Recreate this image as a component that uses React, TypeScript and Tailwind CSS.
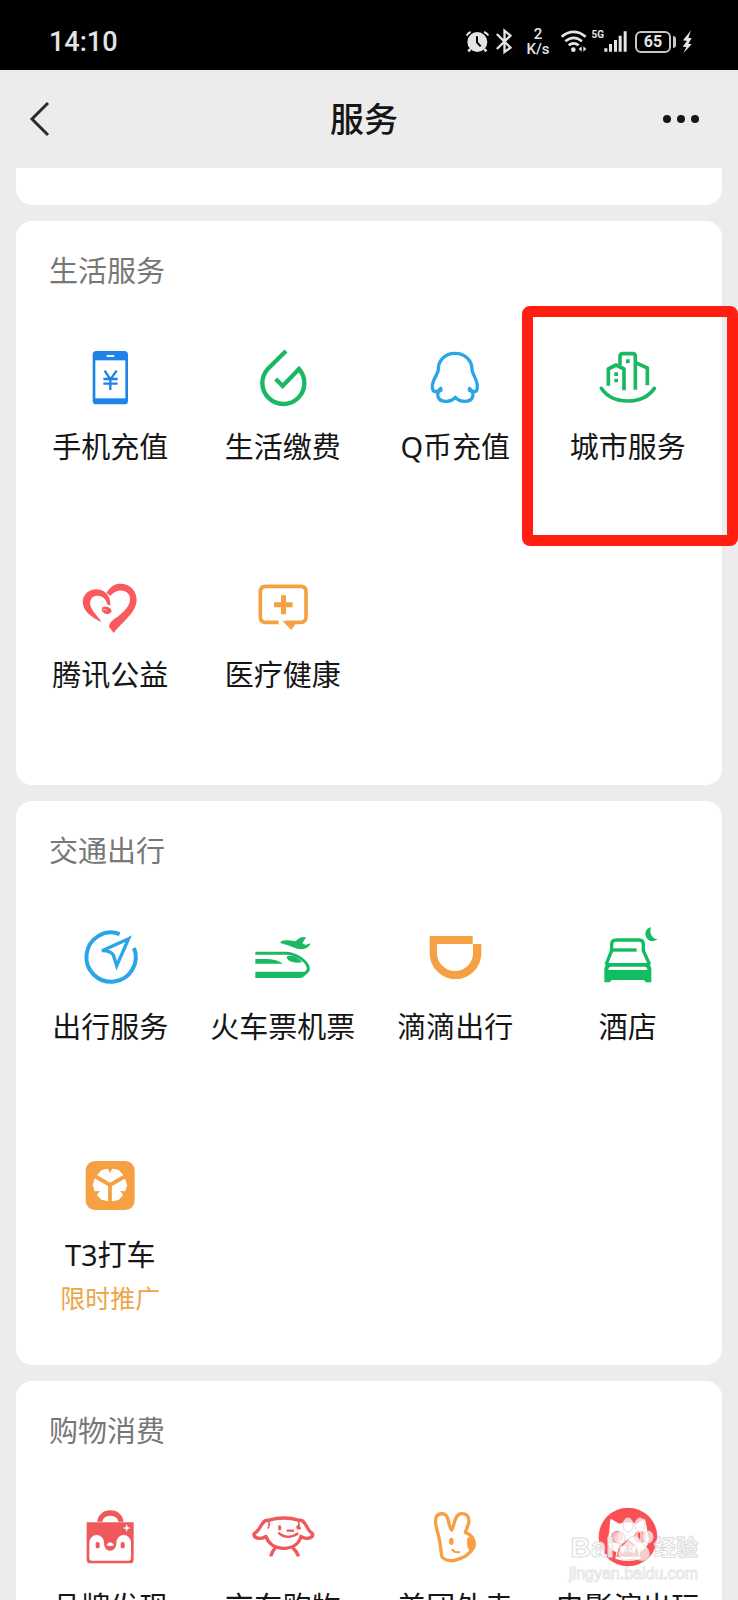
import type { ReactNode } from "react";

type Service = { name: string; icon: ReactNode; promo?: string; highlighted?: boolean };
type Section = { title: string; services: Service[] };

function Icon({ box, children }: { box: string; children: ReactNode }) {
  return (
    <svg viewBox={box} className="size-16 shrink-0" fill="none" aria-hidden="true">
      {children}
    </svg>
  );
}

const BLUE = "#2aa5e8";
const GREEN = "#1bb864";
const ORANGE = "#f5a143";
const RED = "#f0595c";

const PhoneIcon = () => (
  <Icon box="145 48 192 192">
    <rect x="189" y="63" width="106" height="160" rx="11" fill="#1e83e8" />
    <rect x="197" y="91" width="90" height="114" fill="#fff" />
    <rect x="231" y="75" width="23" height="6" rx="2" fill="#fff" />
    <path d="M225 122 L242 148 L261 122 M242 146 V180 M221 147 H264 M221 161 H264" stroke="#1e83e8" strokeWidth="7" />
  </Icon>
);

const DropIcon = () => (
  <Icon box="662 48 192 192">
    <path d="M767 63 L713 116 A63 63 0 1 0 806 117 L757 168 L736 147" stroke={GREEN} strokeWidth="13" />
  </Icon>
);

const PenguinIcon = () => (
  <Icon box="130 138 192 192">
    <path
      d="M226 160 C195 160 176 182 176 208 C176 222 158 238 158 259 C158 269 162 275 167 275 C173 275 179 271 183 265 L184 271 C176 273 172 280 175 290 C178 300 188 304 200 304 C212 304 221 300 227 292 C233 300 242 304 254 304 C266 304 276 300 279 290 C282 280 278 273 269 271 L270 265 C274 271 280 275 285 275 C290 275 293 269 293 259 C293 238 277 222 277 208 C277 182 257 160 226 160 Z"
      stroke={BLUE}
      strokeWidth="10"
      strokeLinejoin="round"
    />
  </Icon>
);

const CityIcon = () => (
  <Icon box="647 138 192 192">
    <g stroke={GREEN} strokeWidth="11" strokeLinejoin="round">
      <path d="M663 265 C680 291 710 303 742 303 C774 303 804 291 822 265" strokeLinecap="round" />
      <path d="M684 257 V207 L707 195 L731 207 V271" />
      <path d="M719 196 V170 Q719 161 728 161 H757 Q765 161 765 170 V269" />
      <path d="M766 188 L801 204 V256" />
    </g>
    <path d="M737 178 h11 v12 h-11z M702 217 h11 v11 h-11z M702 236 h11 v11 h-11z" fill={GREEN} />
  </Icon>
);

const HeartIcon = () => (
  <Icon box="145 42 192 192">
    <g fill="#fa5a5e">
      <path d="M230 99 C243 78 257 71 272 71 C301 71 322 93 321 121 C319 158 280 184 252 219 L238 200 C240 186 249 180 263 171 C286 153 302 137 301 115 C299 90 264 82 243 107 Z" />
      <path d="M214 186 C184 172 160 152 159 127 C159 104 178 88 201 88 C226 89 244 108 242 136 L234 135 C229 115 216 106 202 107 C184 108 177 124 184 142 C190 156 202 168 212 180 Z" />
      <path d="M219 142 C226 136 241 141 245 149 C248 158 237 164 228 161 C219 159 212 151 219 142 Z" />
    </g>
    <path d="M220 149 q8 -3 12 4" stroke="#fff" strokeWidth="2" />
  </Icon>
);

const MedicalIcon = () => (
  <Icon box="662 42 192 192">
    <path
      d="M745 187 H706 Q690 187 690 171 V95 Q690 79 706 79 H811 Q827 79 827 95 V171 Q827 187 811 187 H766"
      stroke={ORANGE}
      strokeWidth="11"
    />
    <path d="M756 182 L797 190 L783 210 Z M731 127 h21 v-21 h15 v21 h20 v15 h-20 v21 h-15 v-21 h-21z" fill={ORANGE} />
  </Icon>
);

const CompassIcon = () => (
  <Icon box="145 78 192 192">
    <path d="M270 102 A74 74 0 1 0 313 144" stroke={BLUE} strokeWidth="12" />
    <path d="M297 116 L217 152 Q248 153 252 168 L261 197 Z" stroke={BLUE} strokeWidth="10" />
  </Icon>
);

const TrainIcon = () => (
  <Icon box="662 78 192 192">
    <path d="M675 160 H765 C800 160 834 187 834 206 C834 220 816 221 813 232" stroke={GREEN} strokeWidth="9" />
    <g fill={GREEN}>
      <path d="M675 215 H822 L816 225 L812 234 H675 Z" />
      <path d="M675 177 H710 C733 178 748 184 757 191 H675 Z" />
      <path d="M772 168 C792 164 806 174 815 187 C802 189 788 188 780 184 C771 180 766 171 772 168 Z" />
      <path d="M751 125 C760 119 778 120 795 124 L808 114 Q817 109 827 112 L816 130 C822 135 830 135 834 131 H840 C836 144 818 149 805 147 C790 144 770 133 751 130 Z" />
    </g>
  </Icon>
);

const DidiIcon = () => (
  <Icon box="130 78 192 192">
    <path
      d="M150 108 H279 V132 H305 V160 A77 77 0 0 1 150 160 Z M172 132 V160 A54 53 0 0 0 280 160 V132 Z"
      fill={ORANGE}
      fillRule="evenodd"
    />
  </Icon>
);

const HotelIcon = () => (
  <Icon box="647 78 192 192">
    <path d="M812 82 C798 85 792 98 797 110 C803 124 820 128 831 117 C815 117 806 99 812 82 Z" fill="#11bd61" />
    <path d="M677 194 L694 152 V133 Q694 120 707 120 H777 Q789 120 789 133 V152 L808 194" stroke="#11bd61" strokeWidth="10" />
    <path d="M697 150 H769" stroke="#11bd61" strokeWidth="10" />
    <path
      d="M672 247 V205 L678 189 H807 L813 205 V247 H796 Q794 240 788 240 H697 Q691 240 689 247 Z M684 210 H801 Q801 200 792 200 H693 Q684 200 684 210 Z"
      fill="#11bd61"
      fillRule="evenodd"
    />
  </Icon>
);

const T3Icon = () => {
  const lobe = "M241 126 L205 105 L217 92 L233 88 L239 100 Q241 103 243 100 L249 88 L266 92 L278 105 Z";
  return (
    <Icon box="145 42 192 192">
      <rect x="168" y="63" width="147" height="147" rx="28" fill={ORANGE} />
      <g fill="#fff" stroke="#fff" strokeWidth="4" strokeLinejoin="round">
        <path d={lobe} />
        <path d={lobe} transform="rotate(120 241 135)" />
        <path d={lobe} transform="rotate(240 241 135)" />
      </g>
    </Icon>
  );
};

const BagIcon = () => (
  <Icon box="145 48 192 192">
    <path d="M203 95 A39 34 0 0 1 281 95 H266 A24 18 0 0 0 218 95 Z" fill={RED} />
    <path d="M171 97 H312 V209 Q312 220 301 220 H182 Q171 220 171 209 Z" fill={RED} />
    <path
      d="M179 159 A22 24 0 0 1 223 159 C223 172 230 182 241 182 C253 182 260 172 260 159 A22 24 0 0 1 304 159 V204 Q304 212 296 212 H187 Q179 212 179 204 Z"
      fill="#fff"
    />
    <path d="M230 166 Q241 148 254 166 Q242 171 230 166 Z M291 102 L294 111 L303 114 L294 117 L291 126 L288 117 L279 114 L288 111 Z" fill="#fff" />
    <rect x="198" y="156" width="12" height="19" rx="5" fill={RED} />
    <rect x="273" y="156" width="12" height="19" rx="5" fill={RED} />
  </Icon>
);

const DogIcon = () => (
  <Icon box="662 48 192 192">
    <g stroke={RED} strokeWidth="10" strokeLinejoin="round">
      <path d="M714 91 Q760 77 807 91 C826 86 828 122 847 131 C849 146 826 149 812 139 C806 162 786 175 760 175 C734 175 714 162 707 139 C694 149 669 147 671 131 C692 122 694 86 714 91 Z" />
      <path d="M736 172 Q725 184 721 199 M786 172 Q799 184 805 199" />
      <path d="M744 128 Q770 152 804 130" strokeWidth="7" />
      <path d="M769 122 H791" strokeWidth="7" />
      <path d="M713 92 Q720 100 713 116 M808 92 Q802 100 810 118" strokeWidth="5" />
    </g>
    <ellipse cx="748" cy="113" rx="5" ry="8" fill={RED} />
    <ellipse cx="803" cy="112" rx="5" ry="7" fill={RED} />
  </Icon>
);

const RabbitIcon = () => (
  <Icon box="130 48 192 192">
    <path
      d="M186 198 L181 160 C178 130 162 105 169 83 C175 67 198 68 203 82 C209 97 208 112 216 120 C224 112 222 75 244 71 C264 69 271 85 266 103 L257 127 C275 134 284 145 284 163 C284 181 269 187 258 198 C240 206 228 214 212 212 C197 210 188 207 186 198 Z"
      stroke={ORANGE}
      strokeWidth="10"
      strokeLinejoin="round"
    />
    <path d="M266 142 C288 140 290 182 272 185 C262 178 258 150 266 142 Z" fill={ORANGE} />
    <ellipse cx="215" cy="154" rx="7" ry="11" fill={ORANGE} />
    <path d="M217 177 Q224 190 241 186" stroke={ORANGE} strokeWidth="6" />
  </Icon>
);

const CatIcon = () => (
  <Icon box="647 48 192 192">
    <circle cx="743" cy="141" r="88" fill="#fb5053" />
    <path
      d="M691 86 L717 101 Q743 93 770 101 L793 86 C800 104 799 122 805 146 C807 170 786 183 778 186 L781 206 Q743 220 705 206 L708 186 C695 182 680 168 682 146 C690 122 686 104 691 86 Z"
      fill="#fff"
    />
    <path d="M743 146 L770 170 L778 200 H708 L716 170 Z" fill="#fb6a6c" />
    <path d="M716 172 L743 160 L770 172 L760 190 L743 182 L726 190 Z" fill="#fff" />
    <path d="M736 165 h14 l-7 8z M743 172 V184 M724 194 H762" fill="#fb5053" stroke="#fb5053" strokeWidth="3" />
    <circle cx="710" cy="141" r="17" fill="#ffb4b9" stroke="#f78a90" strokeWidth="3" />
    <circle cx="779" cy="141" r="17" fill="#ffb4b9" stroke="#f78a90" strokeWidth="3" />
    <path d="M711 128 V153 M776 128 V153" stroke="#fb5053" strokeWidth="6" />
  </Icon>
);

const sections: Section[] = [
  {
    title: "生活服务",
    services: [
      { name: "手机充值", icon: <PhoneIcon /> },
      { name: "生活缴费", icon: <DropIcon /> },
      { name: "Q币充值", icon: <PenguinIcon /> },
      { name: "城市服务", icon: <CityIcon />, highlighted: true },
      { name: "腾讯公益", icon: <HeartIcon /> },
      { name: "医疗健康", icon: <MedicalIcon /> },
    ],
  },
  {
    title: "交通出行",
    services: [
      { name: "出行服务", icon: <CompassIcon /> },
      { name: "火车票机票", icon: <TrainIcon /> },
      { name: "滴滴出行", icon: <DidiIcon /> },
      { name: "酒店", icon: <HotelIcon /> },
      { name: "T3打车", icon: <T3Icon />, promo: "限时推广" },
    ],
  },
  {
    title: "购物消费",
    services: [
      { name: "品牌发现", icon: <BagIcon /> },
      { name: "京东购物", icon: <DogIcon /> },
      { name: "美团外卖", icon: <RabbitIcon /> },
      { name: "电影演出玩", icon: <CatIcon /> },
    ],
  },
];

function StatusBar() {
  return (
    <div className="flex h-[70px] shrink-0 items-center justify-between bg-black pt-3.5 pr-[46px] pl-[49px] font-[Roboto,sans-serif] text-[#e4e4e4]">
      <time className="text-[27px] leading-8 font-medium">14:10</time>
      <div className="flex items-center">
        <svg viewBox="79 55 69 84" className="h-7 w-[23px]" fill="none" aria-hidden="true">
          <circle cx="113" cy="97" r="30" fill="#e4e4e4" />
          <path d="M92 118 L86 125 M134 118 L140 125" stroke="#e4e4e4" strokeWidth="8" />
          <path d="M81 78 Q84 70 93 67 M133 67 Q142 70 146 78" stroke="#e4e4e4" strokeWidth="6" />
          <path d="M112 80 V98 L123 110" stroke="#000" strokeWidth="6" />
        </svg>
        <svg viewBox="168 55 47 84" className="ml-[7px] h-7 w-4" fill="none" aria-hidden="true">
          <path d="M170 73 L211 114 L193 127 V63 L211 78 L170 118" stroke="#e4e4e4" strokeWidth="7" />
        </svg>
        <div className="ml-3.5 flex w-[23px] flex-col items-center text-[15px] leading-[15px] font-medium">
          <span>2</span>
          <span>K/s</span>
        </div>
        <svg viewBox="363 55 78 84" className="ml-3 h-7 w-[26px]" fill="none" aria-hidden="true">
          <path d="M365 81 Q401 52 437 81 M376 95 Q401 74 426 95 M386 107 Q401 95 416 107" stroke="#e4e4e4" strokeWidth="8" />
          <circle cx="400" cy="120" r="7" fill="#e4e4e4" />
          <path d="M425 110 V126 L416 118 Z M430 110 V126 L439 118 Z" fill="#e4e4e4" />
        </svg>
        <span className="ml-1 self-start text-[10px] leading-4 font-bold">5G</span>
        <svg viewBox="491 55 69 84" className="h-7 w-[23px]" aria-hidden="true">
          <path d="M492 116 h9 v10 h-9z M506 103 h9 v23 h-9z M521 91 h9 v35 h-9z M535 78 h9 v48 h-9z M550 65 h9 v61 h-9z" fill="#e4e4e4" />
        </svg>
        <div className="ml-2 flex items-center gap-0.5">
          <span className="flex h-[22px] w-9 items-center justify-center rounded-md border-2 border-[#c8c8c8] text-base leading-4 font-bold">65</span>
          <span className="h-3 w-[3px] rounded-r-sm bg-[#c8c8c8]" />
        </div>
        <svg viewBox="725 55 30 84" className="ml-1.5 h-7 w-2.5" aria-hidden="true">
          <path d="M752 62 L728 92 L740 94 L727 111 L738 112 L729 131 L754 104 L744 102 L754 86 L744 84 Z" fill="#e4e4e4" />
        </svg>
      </div>
    </div>
  );
}

function NavBar() {
  return (
    <header className="grid h-[98px] shrink-0 grid-cols-[1fr_auto_1fr] items-center pr-[38px] pl-7">
      <button type="button" aria-label="返回" className="justify-self-start">
        <svg viewBox="0 0 24 36" className="h-9 w-6" fill="none" aria-hidden="true">
          <path d="M20 2 L4 18 L20 34" stroke="#2b2b2b" strokeWidth="3" />
        </svg>
      </button>
      <h1 className="text-[34px] leading-10 font-medium text-[#161616]">服务</h1>
      <button type="button" aria-label="更多" className="justify-self-end">
        <svg viewBox="0 0 38 10" className="h-2.5 w-[38px]" fill="#161616" aria-hidden="true">
          <circle cx="5" cy="5" r="4" />
          <circle cx="19" cy="5" r="4" />
          <circle cx="33" cy="5" r="4" />
        </svg>
      </button>
    </header>
  );
}

function ServiceItem({ service }: { service: Service }) {
  return (
    <li className="relative">
      <a href="#" className="flex h-full flex-col items-center pt-9">
        {service.icon}
        <span className="mt-4 text-[29px] leading-[42px] whitespace-nowrap text-[#161616]">{service.name}</span>
        {service.promo && <span className="mt-1.5 text-[25px] leading-8 text-[#eda548]">{service.promo}</span>}
      </a>
      {service.highlighted && (
        <div className="pointer-events-none absolute -top-1 -right-6 -left-5 h-60 rounded-lg border-[11px] border-[#ff1f10]" />
      )}
    </li>
  );
}

function ServiceCard({ section }: { section: Section }) {
  return (
    <section className="rounded-2xl bg-white px-2 pt-[30px] pb-[19px]">
      <h2 className="px-[25px] text-[29px] leading-10 text-[#777]">{section.title}</h2>
      <ul className="mt-[19px] grid auto-rows-[228px] grid-cols-4">
        {section.services.map((service) => (
          <ServiceItem key={service.name} service={service} />
        ))}
      </ul>
    </section>
  );
}

function Watermark() {
  return (
    <div className="pointer-events-none absolute right-10 bottom-4 flex flex-col items-end font-['Liberation_Sans','Noto_Sans_CJK_SC',sans-serif] text-white/80">
      <div className="flex items-center text-[28px] leading-8 font-bold [-webkit-text-stroke:1px_#dcdcdc]">
        <span>Bai</span>
        <svg viewBox="0 0 40 48" className="-mt-4 h-12 w-10" fill="#fff" fillOpacity="0.7" stroke="#dcdcdc" aria-hidden="true">
          <ellipse cx="6" cy="22" rx="5" ry="6" />
          <ellipse cx="14" cy="9" rx="5" ry="7" />
          <ellipse cx="26" cy="9" rx="5" ry="7" />
          <ellipse cx="34" cy="21" rx="5" ry="6" />
          <path d="M20 20 C14 20 13 28 7 32 C2 38 6 46 13 44 Q20 42 26 44 C34 46 38 38 33 32 C27 28 26 20 20 20 Z" />
          <path d="M18 29 V40 H11 V33 H18 M22 33 V40 H29 V33" fill="none" />
        </svg>
        <span className="text-[22px]">经验</span>
      </div>
      <span className="text-base leading-5 [-webkit-text-stroke:1px_#e6e6e6]">jingyan.baidu.com</span>
    </div>
  );
}

export default function App() {
  return (
    <div className="relative flex h-screen flex-col overflow-hidden bg-[#ececec] font-['Noto_Sans','Noto_Sans_CJK_SC',sans-serif]">
      <StatusBar />
      <NavBar />
      <main className="flex min-h-0 flex-1 flex-col gap-4 overflow-y-auto px-4 [scrollbar-width:none]">
        <div className="h-[37px] shrink-0 rounded-b-2xl bg-white" />
        {sections.map((section) => (
          <ServiceCard key={section.title} section={section} />
        ))}
      </main>
      <Watermark />
    </div>
  );
}
